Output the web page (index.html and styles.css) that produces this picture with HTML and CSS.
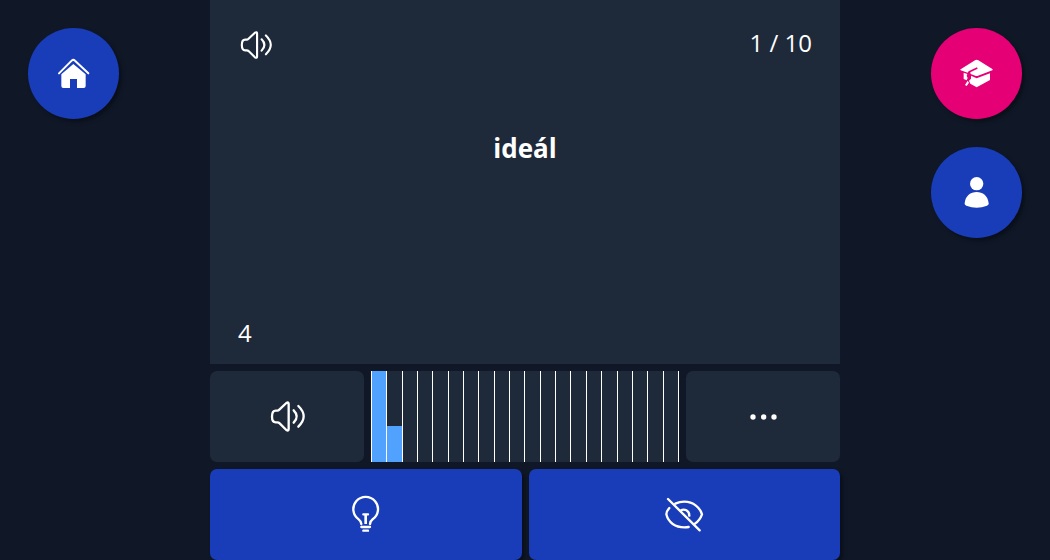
FILE: index.html
```html
<!DOCTYPE html>
<html lang="cs">
<head>
<meta charset="utf-8">
<meta name="viewport" content="width=device-width, initial-scale=1">
<title>ideál</title>
<link rel="stylesheet" href="styles.css">
</head>
<body>
<svg class="defs" aria-hidden="true">
  <symbol id="speaker" viewBox="44 26 105 105">
    <path class="line thick" d="M93 38 72 58Q69 61 66 61H61Q50 61 50 78.500T61 96H66Q70 96 73 99L93 119Q100 123 100 116V41Q100 34 93 38ZM115 60Q133 78 115 97M129 47Q161 78 129 109"/>
  </symbol>
</svg>
<div class="app">
  <nav class="side">
    <a class="round" href="#home" aria-label="Home">
      <svg class="icon-home" viewBox="111 111 99 99"><path class="line" d="M117 160 155 122Q160 117 165 122L205 160"/><path class="solid" d="M124 163 160 132 197 163V198Q197 204 191 204H171V177H150V204H130Q124 204 124 198Z"/></svg>
    </a>
  </nav>
  <main class="deck">
    <section class="card">
      <header class="card-head">
        <button class="plain" type="button" aria-label="Play"><svg class="icon-small"><use href="#speaker"/></svg></button>
        <span>1 / 10</span>
      </header>
      <h1 class="word">ideál</h1>
      <footer>4</footer>
    </section>
    <div class="tools">
      <button class="panel" type="button" aria-label="Play word"><svg class="icon-medium"><use href="#speaker"/></svg></button>
      <div class="chart" role="img" aria-label="Progress">
        <div class="slot"><div class="bar" style="height:100%"></div></div>
        <div class="slot"><div class="bar" style="height:40%"></div></div>
        <div class="slot"></div><div class="slot"></div><div class="slot"></div>
        <div class="slot"></div><div class="slot"></div><div class="slot"></div>
        <div class="slot"></div><div class="slot"></div><div class="slot"></div>
        <div class="slot"></div><div class="slot"></div><div class="slot"></div>
        <div class="slot"></div><div class="slot"></div><div class="slot"></div>
        <div class="slot"></div><div class="slot"></div><div class="slot"></div>
      </div>
      <button class="panel" type="button" aria-label="More"><svg class="icon-medium" viewBox="-2 -1 105 105"><g class="solid"><circle cx="19" cy="53" r="8"/><circle cx="51" cy="53" r="8"/><circle cx="82" cy="53" r="8"/></g></svg></button>
    </div>
    <div class="actions">
      <button class="action" type="button" aria-label="Hint"><svg class="icon-large" viewBox="47 43 123 123"><path class="line thick" d="M96 133Q95 124 88 119A37 37 0 1 1 130 119Q123 124 122 133M102 104H116M96 142H122M102 153H116"/><path class="line stem" d="M109 104V133"/></svg></button>
      <button class="action" type="button" aria-label="Hide"><svg class="icon-large" viewBox="42 43 123 123"><path class="line thick" d="M54 58 149 152M76 72Q89 66 103 66C130 66 151 85 156 104Q150 121 135 132M58 85Q49 95 49 104C55 129 76 143 103 143Q110 143 116 142M92 93Q100 87 109 92 118 97 118 108"/></svg></button>
    </div>
  </main>
  <nav class="side end">
    <a class="round pink" href="#learn" aria-label="Learn">
      <svg class="icon-medium" viewBox="117 108 105 105"><path class="solid" d="M122 148 165 121Q170 118 175 121L217 147Q220 149 217 151L174 167Q170 169 166 167L152 162 151 157 173 146 171 142 147 153Q144 155 143 158L122 151Q119 150 122 148ZM131 158 142 162 140 168 143 174 140 181 131 177ZM153 167 170 175 210 160V180L170 202 151 191 147 182 153 176ZM143 182 147 188 140 198 135 195Z"/></svg>
    </a>
    <a class="round" href="#profile" aria-label="Profile">
      <svg class="icon-home" viewBox="120 108 99 99"><circle class="solid" cx="170" cy="131" r="20"/><path class="solid" d="M134 190C136 167 152 156 170 156S204 167 206 190Q207 195 201 197 170 209 139 197 133 195 134 190Z"/></svg>
    </a>
  </nav>
</div>
</body>
</html>
```
FILE: styles.css
```css
* { box-sizing: border-box; }
body {
  margin: 0;
  background: #101828;
  color: #fff;
  font: 24px/30px "Open Sans", "Noto Sans", sans-serif;
}
button { font: inherit; color: inherit; border: 0; padding: 0; cursor: pointer; }
svg { display: block; }
.defs { display: none; }
.app { display: grid; grid-template-columns: 1fr 3fr 1fr; min-height: 100vh; }
.side { display: flex; flex-direction: column; gap: 28px; padding: 28px; }
.end { align-items: flex-end; }
.round {
  display: grid;
  place-items: center;
  width: 91px;
  height: 91px;
  border-radius: 50%;
  background: #193cb8;
  box-shadow: 3px 3px 4px rgba(0, 0, 0, 0.4);
}
.pink { background: #e60076; }
.deck { display: grid; grid-template-rows: 1fr 91px 91px; gap: 7px; }
.card {
  display: flex;
  flex-direction: column;
  padding: 28px 28px 16px;
  background: #1e2939;
}
.card-head { display: flex; justify-content: space-between; align-items: flex-start; }
.plain { background: none; margin: 1px 0 0 2px; }
.word { flex: 1; margin: 0; padding-top: 69px; text-align: center; font-size: 26px; line-height: 36px; font-weight: 700; }
.tools { display: grid; grid-template-columns: 1fr 2fr 1fr; gap: 7px; }
.panel { display: grid; place-items: center; border-radius: 7px; background: #1e2939; }
.chart { display: flex; background: #1e2939; border-right: 1px solid #fff; }
.slot { flex: 1; display: flex; align-items: flex-end; border-left: 1px solid #fff; }
.bar { flex: 1; background: #51a2ff; }
.actions { display: grid; grid-template-columns: 1fr 1fr; gap: 7px; }
.action {
  display: grid;
  place-items: center;
  border-radius: 7px;
  background: #193cb8;
  box-shadow: 3px 3px 4px rgba(0, 0, 0, 0.4);
}
.icon-small { width: 32px; height: 32px; }
.icon-home { width: 33px; height: 33px; }
.icon-medium { width: 35px; height: 35px; }
.icon-large { width: 41px; height: 41px; }
.solid { fill: #fff; }
.line { fill: none; stroke: #fff; stroke-width: 6; stroke-linecap: round; stroke-linejoin: round; }
.thick { stroke-width: 7; }
.stem { stroke-width: 8; stroke-linecap: butt; }
```
